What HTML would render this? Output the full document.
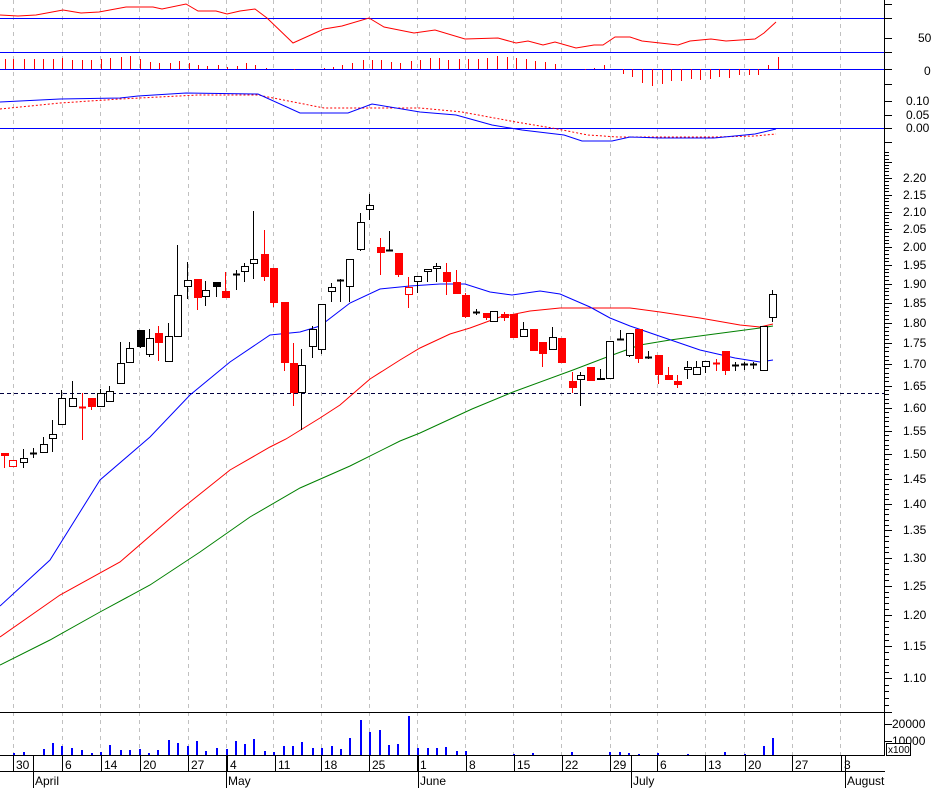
<!DOCTYPE html>
<html><head><meta charset="utf-8">
<style>
html,body{margin:0;padding:0;background:#fff;width:935px;height:788px;overflow:hidden}
svg{display:block}
text{font-family:"Liberation Sans",Arial,sans-serif;font-size:12px;fill:#000}
</style></head>
<body>
<svg id="s" width="935" height="788" xmlns="http://www.w3.org/2000/svg" shape-rendering="crispEdges"></svg>
<script>
var S=document.getElementById('s'),out='';
function L(x1,y1,x2,y2,c,w,d){out+='<line x1="'+x1+'" y1="'+y1+'" x2="'+x2+'" y2="'+y2+'" stroke="'+c+'" stroke-width="'+(w||1)+'"'+(d?' stroke-dasharray="'+d+'"':'')+'/>';}
function P(pts,c,d){out+='<polyline fill="none" stroke="'+c+'" stroke-width="1" shape-rendering="auto"'+(d?' stroke-dasharray="'+d+'"':'')+' points="'+pts.map(function(p){return p[0]+','+p[1]}).join(' ')+'"/>';}
function T(x,y,t,a){out+='<text x="'+x+'" y="'+y+'"'+(a?' text-anchor="'+a+'"':'')+'>'+t+'</text>';}
var G=[13,62,100,139,188,226,273,321,369,417,465,513,561,610,657,705,744,792,840];
G.forEach(function(x){L(x+.5,0,x+.5,755,'#c0c0c0',1,'4,4');});
L(0,18.5,884,18.5,'#0000ff');L(0,52.5,884,52.5,'#0000ff');L(0,69.5,884,69.5,'#0000ff');L(0,128.5,884,128.5,'#0000ff');
L(0,712.5,884,712.5,'#000');
P([[0,15],[18,16],[36,15],[63,10],[81,13],[99,12],[126,7],[153,7],[162,9],[186,4],[198,11],[216,11],[227,14],[240,11],[255,9],[267,18],[293,43],[324,29],[342,26],[369,18],[384,27],[414,33],[435,30],[465,39],[498,38],[516,43],[528,41],[543,45],[555,42],[576,48],[594,45],[603,45],[615,37],[630,37],[642,41],[660,43],[678,45],[690,41],[711,39],[726,41],[755,39],[764,33],[776,22]],'#ff0000');
var H=[[8,33],[22,33],[40,33],[56,33],[72,33],[88,33],[104,30],[120,36],[136,36],[152,36],[168,33],[184,30],[202,27],[217,24],[234,33],[250,42],[265,45],[283,45],[299,39],[315,45],[330,51],[345,54],[363,51],[378,57],[395,54],[410,45],[426,51],[443,60],[458,62],[490,66],[525,63],[540,60],[556,57],[571,51],[587,45],[605,36],[620,36],[636,36],[652,42],[668,45],[685,39],[700,36],[717,30],[732,30],[748,36],[765,33],[781,33],[797,33],[812,30],[829,24],[846,27],[861,30],[878,33],[893,39],[909,42],[926,48],[958,63],[975,66],[990,60],[1007,51],[1039,77],[1054,87],[1071,104],[1088,114],[1104,107],[1120,99],[1136,99],[1152,93],[1168,96],[1184,93],[1200,87],[1216,90],[1233,81],[1249,81],[1264,81],[1281,51],[1297,27]];
H.forEach(function(h){var x=Math.round(h[0]/1.668)+.5,y=48+h[1]/3;L(x,69,x,Math.round(y),'#ff0000');});
P([[0,109],[60,103],[120,99],[198,95],[258,95],[324,108],[420,108],[462,112],[516,122],[552,128],[588,135],[618,137],[714,137],[755,136],[776,134]],'#ff0000','2,2');
P([[0,102],[60,99],[120,98],[138,96],[186,93],[258,94],[300,113],[348,113],[372,104],[420,112],[456,115],[492,125],[522,130],[564,135],[582,141],[612,141],[630,137],[660,138],[714,138],[755,134],[776,129]],'#0000ff');
L(0,393.5,884,393.5,'#000040',1,'4,3');
P([[0,665],[50,640],[100,612],[150,585],[200,552],[250,517],[300,488],[350,466],[400,441],[420,433],[472,409],[513,392],[573,370],[607,357],[640,345],[670,340],[707,335],[760,328],[773,326]],'#008000');
P([[0,637],[60,595],[120,562],[180,510],[230,470],[270,447],[286,439],[320,418],[340,405],[370,379],[400,360],[420,348],[450,334],[470,328],[500,317],[530,311],[560,308],[600,308],[630,308],[660,312],[700,318],[740,325],[760,327],[773,324]],'#ff0000');
P([[0,606],[50,560],[100,480],[150,437],[190,395],[230,362],[270,335],[300,332],[320,326],[350,303],[380,289],[410,286],[440,284],[465,284],[490,292],[512,295],[540,291],[560,294],[590,307],[610,318],[630,326],[665,338],[700,350],[735,358],[760,362],[773,360]],'#0000ff');
var C=[[4,453,468,453,456,'r'],[12,460,467,460,467,'ro'],[23,449,468,458,463,'w'],[33,448,458,453,453,'d'],[43,437,453,444,453,'w'],[52,420,452,434,439,'w'],
[61,390,425,398,425,'w'],[72,381,407,398,407,'w'],[82,393,440,407,407,'rd'],[91,398,410,398,407,'r'],[100,389,407,393,407,'w'],[109,386,402,391,402,'w'],
[120,342,384,363,384,'w'],[129,342,363,348,363,'w'],[140,330,348,330,347,'b'],[149,329,357,338,355,'w'],[158,326,361,333,343,'r'],[168,323,362,336,362,'w'],
[177,245,337,295,337,'w'],[187,262,299,280,287,'w'],[197,279,310,279,298,'r'],[205,281,306,290,297,'w'],[216,282,297,282,287,'b'],[225,272,298,291,298,'r'],
[236,270,290,274,274,'d'],[244,263,282,266,272,'w'],[253,211,279,259,264,'w'],[264,230,281,254,277,'r'],[273,268,307,268,303,'r'],[284,302,371,302,363,'r'],
[293,343,406,363,393,'r'],[301,349,430,365,393,'w'],[312,326,358,329,347,'w'],[321,304,354,304,350,'w'],[331,283,302,287,292,'w'],[340,279,302,280,280,'d'],
[349,259,302,259,287,'w'],[360,213,251,222,250,'w'],[369,194,220,205,210,'w'],[380,238,275,247,253,'r'],[389,231,251,250,250,'d'],[398,253,277,253,275,'r'],
[408,277,308,287,295,'ro'],[417,276,293,276,282,'w'],[427,269,282,269,272,'w'],[436,263,282,266,269,'w'],[446,263,295,272,282,'r'],[456,270,293,282,294,'r'],
[465,293,318,295,317,'r'],[476,309,315,312,312,'d'],[486,313,320,313,318,'r'],[493,311,322,311,322,'w'],[504,312,321,314,318,'r'],[513,314,338,314,338,'r'],
[523,322,337,329,337,'w'],[533,329,351,329,351,'r'],[542,342,367,342,354,'r'],[552,327,350,337,350,'w'],[561,338,363,338,363,'r'],[572,372,393,381,388,'r'],
[580,372,406,375,380,'w'],[590,367,381,367,381,'r'],[600,369,380,378,380,'w'],[609,341,379,341,379,'w'],[620,330,339,339,339,'d'],[629,333,357,333,356,'w'],
[638,329,363,329,359,'r'],[648,351,359,357,357,'d'],[658,355,384,355,375,'r'],[668,367,380,375,380,'r'],[677,375,388,381,385,'r'],[687,361,379,367,370,'w'],
[696,361,375,367,375,'w'],[705,361,373,361,367,'w'],[716,359,371,363,363,'rd'],[725,351,375,351,371,'r'],[735,362,371,365,365,'d'],[744,362,370,364,364,'d'],
[753,362,369,364,364,'d'],[763,326,371,326,371,'w'],[772,290,322,294,318,'w']];
C.forEach(function(c){var x=c[0]+.5,t=c[5],col=(t[0]=='r')?'#ff0000':'#000';
 L(x,c[1],x,c[2],col,1);
 if(t=='d'||t=='rd'){L(c[0]-3,c[3]+.5,c[0]+4,c[3]+.5,col,2);return;}
 var h=Math.max(c[4]-c[3],2);
 if(t=='r')out+='<rect x="'+(c[0]-3)+'" y="'+c[3]+'" width="8" height="'+h+'" fill="#ff0000"/>';
 else if(t=='b')out+='<rect x="'+(c[0]-3)+'" y="'+c[3]+'" width="8" height="'+h+'" fill="#000"/>';
 else out+='<rect x="'+(c[0]-3+.5)+'" y="'+(c[3]+.5)+'" width="7" height="'+(h-1)+'" fill="#fff" stroke="'+col+'" stroke-width="1.3"/>';
});
var V=[[13,165],[40,158],[70,156],[100,165],[130,147],[157,129],[184,138],[214,144],[244,150],[274,159],[301,156],[328,135],[361,150],[388,150],[418,147],[445,159],[472,150],[505,120],[532,129],[562,138],[589,123],[616,153],[649,144],[677,147],[706,123],[733,132],[760,117],[793,153],[820,156],[850,138],[877,138],[904,126],[937,144],[964,144],[994,138],[1021,147],[1048,114],[1081,60],[1108,96],[1138,90],[1165,135],[1192,132],[1225,48],[1252,144],[1282,144],[1309,144],[1336,141],[1369,153],[1396,153]];
V.forEach(function(v){var x=Math.round(v[0]/3);out+='<rect x="'+x+'" y="'+Math.round(700+v[1]/3)+'" width="2" height="'+(756-Math.round(700+v[1]/3))+'" fill="#0000ff"/>';});
var V2=[[16,141],[49,153],[76,153],[106,165],[133,165],[220,162],[250,165],[277,159],[307,165],[364,165],[394,156],[421,165],[508,156],[538,156],[565,159],[595,162],[652,159],[682,165],[709,165],[742,162],[853,156],[913,162],[970,138],[997,114]];
V2.forEach(function(v){var x=Math.round(440+v[0]/3);out+='<rect x="'+x+'" y="'+Math.round(700+v[1]/3)+'" width="2" height="'+(756-Math.round(700+v[1]/3))+'" fill="#0000ff"/>';});
L(884.5,0,884.5,756,'#000');
function yp(p){return 178+721.4*(Math.log(2.2)-Math.log(p));}
for(var k=105;k<=228;k++){var p=k/100,y=Math.round(yp(p))+.5;var maj=(k%5==0);L(885,y,maj?892:889,y,'#000');}
for(var k=110;k<=220;k+=5){var p=k/100;T(903,Math.round(yp(p))+4,p.toFixed(2));}
[4,18,38,52].forEach(function(y){L(885,y+.5,892,y+.5,'#000');});
L(885,69.5,892,69.5,'#000');L(885,84.5,892,84.5,'#000');
[101,115,128,142].forEach(function(y){L(885,y+.5,892,y+.5,'#000');});
T(918,42,'50');T(924,75,'0');T(906,105,'0.10');T(906,119,'0.05');T(906,132,'0.00');
[712,724,741].forEach(function(y){L(885,y+.5,892,y+.5,'#000');});
T(892,728,'20000');T(892,745,'10000');
out+='<rect x="886.5" y="743.5" width="24" height="12" fill="#fff" stroke="#000"/>';
out+='<text x="888" y="753" style="font-size:10px">x100</text>';
L(0,755.5,885,755.5,'#000');L(0,771.5,885,771.5,'#000');
var D=[[13,'30'],[62,'6'],[101,'14'],[140,'20'],[188,'27'],[227,'4'],[275,'11'],[321,'18'],[369,'25'],[417,'1'],[466,'8'],[514,'15'],[562,'22'],[610,'29'],[657,'6'],[705,'13'],[745,'20'],[792,'27'],[841,'3']];
D.forEach(function(d){L(d[0]+.5,756,d[0]+.5,771,'#000');T(d[0]+3,769,d[1]);});
[[33,'April'],[226,'May'],[418,'June'],[631,'July'],[845,'August']].forEach(function(m){L(m[0]+.5,756,m[0]+.5,788,'#000');T(m[0]+2,785,m[1]);});
S.innerHTML=out;
</script>
</body></html>
